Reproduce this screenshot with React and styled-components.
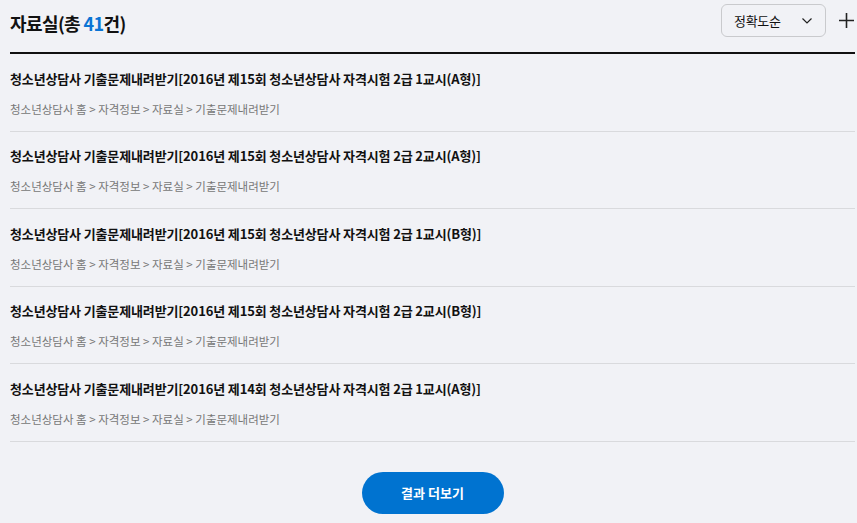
import styled, { createGlobalStyle } from "styled-components";

const GlobalStyle = createGlobalStyle`
  html, body {
    margin: 0;
    padding: 0;
    background: #f1f2f6;
    font-family: "Noto Sans CJK KR", "Noto Sans", sans-serif;
    color: #111;
  }
`;

const Page = styled.div`
  padding: 0 2px 0 10px;
  width: 845px;
`;

const Header = styled.div`
  display: flex;
  align-items: center;
  justify-content: space-between;
  box-sizing: border-box;
  height: 54px;
  padding-bottom: 11px;
  border-bottom: 2px solid #111;
`;

const Heading = styled.h2`
  margin: 5px 0 0;
  font-size: 18px;
  font-weight: 700;
  letter-spacing: -0.6px;

  em {
    font-style: normal;
    color: #0a74d4;
  }
`;

const Tools = styled.div`
  display: flex;
  align-items: center;
  gap: 12px;
`;

const SortSelect = styled.button`
  display: flex;
  align-items: center;
  justify-content: space-between;
  box-sizing: border-box;
  width: 105px;
  height: 33px;
  padding: 0 12px 0 12px;
  border: 1px solid #c9cacd;
  border-radius: 6px;
  background: transparent;
  font: inherit;
  font-size: 13px;
  letter-spacing: -0.3px;
  color: #111;
`;

const List = styled.ul`
  list-style: none;
  margin: 0;
  padding: 0;
`;

const Item = styled.li`
  display: flex;
  flex-direction: column;
  gap: 12px;
  padding: 14.5px 0 13px;
  border-bottom: 1px solid #d9dadd;
`;

const ItemTitle = styled.a`
  font-size: 13px;
  font-weight: 700;
  letter-spacing: -0.14px;
  color: #111;
  line-height: 19px;
`;

const Crumbs = styled.div`
  font-size: 11.5px;
  color: #777;
  line-height: 18px;
`;

const MoreWrap = styled.div`
  display: flex;
  justify-content: center;
  padding: 30px 0 0;
`;

const MoreButton = styled.button`
  width: 142px;
  height: 42px;
  border: none;
  border-radius: 21px;
  background: #0073d0;
  color: #fff;
  font: inherit;
  font-size: 13px;
  font-weight: 700;
`;

const items = [
  "청소년상담사 기출문제내려받기[2016년 제15회 청소년상담사 자격시험 2급 1교시(A형)]",
  "청소년상담사 기출문제내려받기[2016년 제15회 청소년상담사 자격시험 2급 2교시(A형)]",
  "청소년상담사 기출문제내려받기[2016년 제15회 청소년상담사 자격시험 2급 1교시(B형)]",
  "청소년상담사 기출문제내려받기[2016년 제15회 청소년상담사 자격시험 2급 2교시(B형)]",
  "청소년상담사 기출문제내려받기[2016년 제14회 청소년상담사 자격시험 2급 1교시(A형)]",
];

export default function App() {
  return (
    <Page>
      <GlobalStyle />
      <Header>
        <Heading>
          자료실(총 <em>41</em>건)
        </Heading>
        <Tools>
          <SortSelect>
            정확도순
            <svg width="12" height="12" viewBox="0 0 12 12" fill="none" stroke="#222" strokeWidth="1.2">
              <path d="M1.5 3.5l4.5 4.5 4.5-4.5" />
            </svg>
          </SortSelect>
          <svg width="17" height="17" viewBox="0 0 17 17" stroke="#222" strokeWidth="1.6">
            <path d="M8.5 1v15M1 8.5h15" />
          </svg>
        </Tools>
      </Header>
      <List>
        {items.map((title, i) => (
          <Item key={i}>
            <ItemTitle>{title}</ItemTitle>
            <Crumbs>청소년상담사 홈 &gt; 자격정보 &gt; 자료실 &gt; 기출문제내려받기</Crumbs>
          </Item>
        ))}
      </List>
      <MoreWrap>
        <MoreButton>결과 더보기</MoreButton>
      </MoreWrap>
    </Page>
  );
}
